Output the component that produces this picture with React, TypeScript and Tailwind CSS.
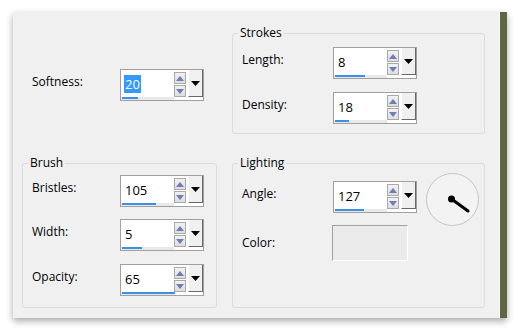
import React from 'react';

const SpinArrow: React.FC<{ down?: boolean }> = ({ down }) => (
  <div className="flex h-[12px] w-[12px] items-center justify-center border border-[#a9a9a9] bg-gradient-to-b from-[#f2f2f2] to-[#dedede]">
    <svg width="8" height="5" viewBox="0 0 8 5">
      {down ? <polygon points="0,0 8,0 4,5" fill="#6c7db8" /> : <polygon points="0,5 8,5 4,0" fill="#6c7db8" />}
    </svg>
  </div>
);

const SpinBox: React.FC<{ value: string; bar: number; selected?: boolean }> = ({ value, bar, selected }) => (
  <div className="flex h-[32px] w-[84px] flex-col border border-[#a0a0a0] bg-white">
    <div className="flex h-[27px]">
      <div className="flex flex-1 items-center pl-[3px]">
        <span
          className={
            selected
              ? 'bg-[#3399ff] px-[1px] text-[13px] leading-[18px] text-white'
              : 'px-[1px] text-[13px] leading-[18px] text-black'
          }
        >
          {value}
        </span>
      </div>
      <div className="flex flex-col gap-[1px] pt-[2px]">
        <SpinArrow />
        <SpinArrow down />
      </div>
      <div className="ml-[2px] flex h-[27px] w-[15px] items-center justify-center border-b border-r border-l border-b-[#696969] border-r-[#696969] border-l-white bg-[#f0f0f0]">
        <svg width="9" height="5" viewBox="0 0 9 5">
          <polygon points="0,0 9,0 4.5,5" fill="#000" />
        </svg>
      </div>
    </div>
    <div className="flex h-[3px]">
      <div className="h-[3px] w-[53px] bg-[#e9e9e9] pl-[1px]">
        <div className="h-[2px] bg-[#3b8fe6]" style={{ width: bar }} />
      </div>
    </div>
  </div>
);

const Group: React.FC<{ title: string; className: string; children: React.ReactNode }> = ({ title, className, children }) => (
  <fieldset className={`rounded-[3px] border border-[#d6dde3] px-0 ${className}`}>
    <legend className="ml-[5px] px-[2px] text-[12px] leading-[16px] text-black">{title}</legend>
    {children}
  </fieldset>
);

const Row: React.FC<{ label: string; labelWidth: string; children: React.ReactNode; className?: string; raised?: boolean }> = ({
  label,
  labelWidth,
  children,
  className = '',
  raised = true,
}) => (
  <div className={`flex items-center ${className}`}>
    <span className={`${labelWidth} ${raised ? 'pb-[6px]' : ''} pl-[9px] text-[12px] text-black`}>{label}</span>
    {children}
  </div>
);

const Dial: React.FC = () => (
  <div className="-mb-[13px] -mt-[8px] ml-[9px] self-start">
    <svg width="53" height="53" viewBox="0 0 53 53">
      <circle cx="26.5" cy="26.5" r="26" fill="#f3f3f3" stroke="#c4c4c4" strokeWidth="1" />
      <line x1="25.5" y1="26" x2="42" y2="38" stroke="#000" strokeWidth="3" strokeLinecap="round" />
      <circle cx="25.5" cy="26" r="3.5" fill="#000" />
    </svg>
  </div>
);

const App: React.FC = () => {
  return (
    <div className="h-[332px] w-[519px] bg-white pl-[13px] pt-[12px]" style={{ fontFamily: '"Open Sans", sans-serif' }}>
      <div className="flex w-[494px] shadow-[0_3px_7px_rgba(0,0,0,0.35)]">
        <div className="flex h-[306px] w-[486px] bg-[#f0f0f0] pl-[9px]">
          <div className="flex w-[195px] flex-col">
            <div className="mt-[57px] flex items-center">
              <span className="w-[98px] pb-[6px] pl-[10px] text-[12px] text-black">Softness:</span>
              <SpinBox value="20" bar={16} selected />
            </div>
            <Group title="Brush" className="mt-[54px] h-[153px]">
              <div className="flex flex-col gap-[12px] pt-[4px]">
                <Row label="Bristles:" labelWidth="w-[97px]">
                  <SpinBox value="105" bar={34} />
                </Row>
                <Row label="Width:" labelWidth="w-[97px]">
                  <SpinBox value="5" bar={20} />
                </Row>
                <Row label="Opacity:" labelWidth="w-[97px]" className="mt-[1px]">
                  <SpinBox value="65" bar={53} />
                </Row>
              </div>
            </Group>
          </div>
          <div className="ml-[15px] flex w-[253px] flex-col">
            <Group title="Strokes" className="mt-[13px] h-[109px]">
              <div className="flex flex-col gap-[13px] pt-[6px]">
                <Row label="Length:" labelWidth="w-[100px]">
                  <SpinBox value="8" bar={30} />
                </Row>
                <Row label="Density:" labelWidth="w-[100px]">
                  <SpinBox value="18" bar={14} />
                </Row>
              </div>
            </Group>
            <Group title="Lighting" className="mt-[21px] h-[153px]">
              <div className="flex flex-col pt-[10px]">
                <Row label="Angle:" labelWidth="w-[100px]">
                  <SpinBox value="127" bar={29} />
                  <Dial />
                </Row>
                <Row label="Color:" labelWidth="w-[99px]" className="mt-[12px]" raised={false}>
                  <div className="h-[36px] w-[76px] border border-b-white border-l-[#a0a0a0] border-r-white border-t-[#a0a0a0] bg-[#ebebeb]" />
                </Row>
              </div>
            </Group>
          </div>
        </div>
        <div className="w-[8px] border-l border-l-[#f8f8f8] bg-[#5f6646]" />
      </div>
    </div>
  );
};

export default App;
